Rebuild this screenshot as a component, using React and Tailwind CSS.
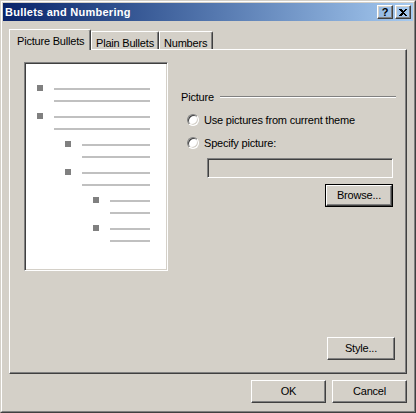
const FONT = { fontFamily: '"Liberation Sans", Arial, sans-serif' }

const RAISED =
  'border border-t-white border-l-white border-r-[#404040] border-b-[#404040] shadow-[inset_-1px_-1px_0_#808080,inset_1px_1px_0_#D4D0C8]'
const SUNKEN =
  'border border-t-[#808080] border-l-[#808080] border-r-white border-b-white shadow-[inset_1px_1px_0_#404040,inset_-1px_-1px_0_#D4D0C8]'

const ITEMS = [
  { lvl: 0 }, { lvl: 0 },
  { lvl: 1 }, { lvl: 1 },
  { lvl: 2 }, { lvl: 2 },
]

const INDENT = ['ml-[11px]', 'ml-[39px]', 'ml-[67px]']
const LINE_W = ['w-[96px]', 'w-[68px]', 'w-[40px]']

function Button({ children, def = false, className = '' }) {
  if (def) {
    return (
      <div className={`h-[23px] w-[68px] border border-black ${className}`}>
        <div className={`h-full w-full ${RAISED} flex items-center justify-center text-[11px] text-black`}>
          {children}
        </div>
      </div>
    )
  }
  return (
    <div className={`h-[23px] ${RAISED} flex items-center justify-center text-[11px] text-black ${className}`}>
      {children}
    </div>
  )
}

function Radio({ label }) {
  return (
    <div className="flex h-[14px] items-center pl-[6px]">
      <div className={`h-[12px] w-[12px] shrink-0 rounded-full bg-white ${SUNKEN}`} />
      <span className="ml-[5px] text-[11px] leading-none text-black">{label}</span>
    </div>
  )
}

function Preview() {
  return (
    <div className={`ml-[14px] mt-[12px] h-[209px] w-[144px] shrink-0 bg-white ${SUNKEN}`}>
      <div className="flex flex-col pt-[22px] pl-[1px]">
        {ITEMS.map((it, i) => (
          <div key={i} className={`flex h-[28px] items-start ${INDENT[it.lvl]}`}>
            <div className="h-[6px] w-[6px] bg-[#808080]" />
            <div className="ml-[11px] flex flex-col gap-[10px] pt-[3px]">
              <div className={`h-[2px] bg-[#C0C0C0] ${LINE_W[it.lvl]}`} />
              <div className={`h-[2px] bg-[#C0C0C0] ${LINE_W[it.lvl]}`} />
            </div>
          </div>
        ))}
      </div>
    </div>
  )
}

export default function App() {
  return (
    <div
      className="h-[413px] w-[416px] border border-t-[#D4D0C8] border-l-[#D4D0C8] border-r-[#404040] border-b-[#404040] bg-[#D4D0C8] tracking-[-0.2px]"
      style={FONT}
    >
      <div className="h-full w-full border border-t-white border-l-white border-r-[#808080] border-b-[#808080] p-px">
        {/* Title bar */}
        <div className="flex h-[18px] items-center bg-gradient-to-r from-[#0A246A] to-[#A6CAF0] pl-[2px] pr-[2px]">
          <span className="flex-1 text-[11px] font-bold tracking-[0.25px] text-white">Bullets and Numbering</span>
          <div className={`flex h-[14px] w-[16px] items-center justify-center ${RAISED}`}>
            <span className="text-[11px] font-bold leading-none text-black">?</span>
          </div>
          <div className={`ml-[2px] flex h-[14px] w-[16px] items-center justify-center ${RAISED}`}>
            <svg width="8" height="7" viewBox="0 0 8 7" shapeRendering="crispEdges">
              <path d="M0 0h2l2 2 2-2h2l-3 3.5 3 3.5h-2l-2-2-2 2h-2l3-3.5z" fill="#000" />
            </svg>
          </div>
        </div>

        {/* Body */}
        <div className="px-[6px] pt-[8px]">
          {/* Tabs */}
          <div className="flex h-[20px] items-start">
            <div className="relative z-10 flex h-[21px] w-[82px] items-start rounded-tr-[2px] border-t border-l border-r border-t-white border-l-white border-r-[#404040] bg-[#D4D0C8] pl-[7px] pt-[3px] shadow-[inset_-1px_0_0_#808080] text-[11px] text-black">
              Picture Bullets
            </div>
            <div className="mt-[2px] flex h-[18px] w-[68px] items-start rounded-tr-[2px] border-t border-l border-r border-t-white border-l-white border-r-[#404040] pl-[4px] pt-[3px] shadow-[inset_-1px_0_0_#808080] text-[11px] text-black">
              Plain Bullets
            </div>
            <div className="mt-[2px] flex h-[18px] w-[54px] items-start rounded-tr-[2px] border-t border-l border-r border-t-white border-l-white border-r-[#404040] pl-[4px] pt-[3px] shadow-[inset_-1px_0_0_#808080] text-[11px] text-black">
              Numbers
            </div>
          </div>

          {/* Panel */}
          <div className="flex h-[325px] w-[398px] flex-col border border-t-white border-l-white border-r-[#404040] border-b-[#404040] shadow-[inset_-1px_-1px_0_#808080]">
            <div className="flex items-start">
              <Preview />
              <div className="ml-[13px] mt-[40px] flex w-[215px] flex-col">
                <div className="flex h-[14px] items-center">
                  <span className="text-[11px] leading-none text-black">Picture</span>
                  <div className="ml-[6px] h-[2px] flex-1 border-t border-b border-t-[#808080] border-b-white" />
                </div>
                <div className="mt-[9px]">
                  <Radio label="Use pictures from current theme" />
                </div>
                <div className="mt-[9px]">
                  <Radio label="Specify picture:" />
                </div>
                <div className={`ml-[26px] mt-[8px] h-[20px] w-[186px] bg-[#D4D0C8] ${SUNKEN}`} />
                <div className="mt-[6px] flex justify-end pr-[3px]">
                  <Button def>Browse...</Button>
                </div>
              </div>
            </div>
            <div className="mt-auto flex justify-end pb-[13px] pr-[11px]">
              <Button className="w-[68px]">Style...</Button>
            </div>
          </div>

          {/* Dialog buttons */}
          <div className="mt-[6px] flex justify-end gap-[6px]">
            <Button className="w-[75px]">OK</Button>
            <Button className="w-[75px]">Cancel</Button>
          </div>
        </div>
      </div>
    </div>
  )
}
